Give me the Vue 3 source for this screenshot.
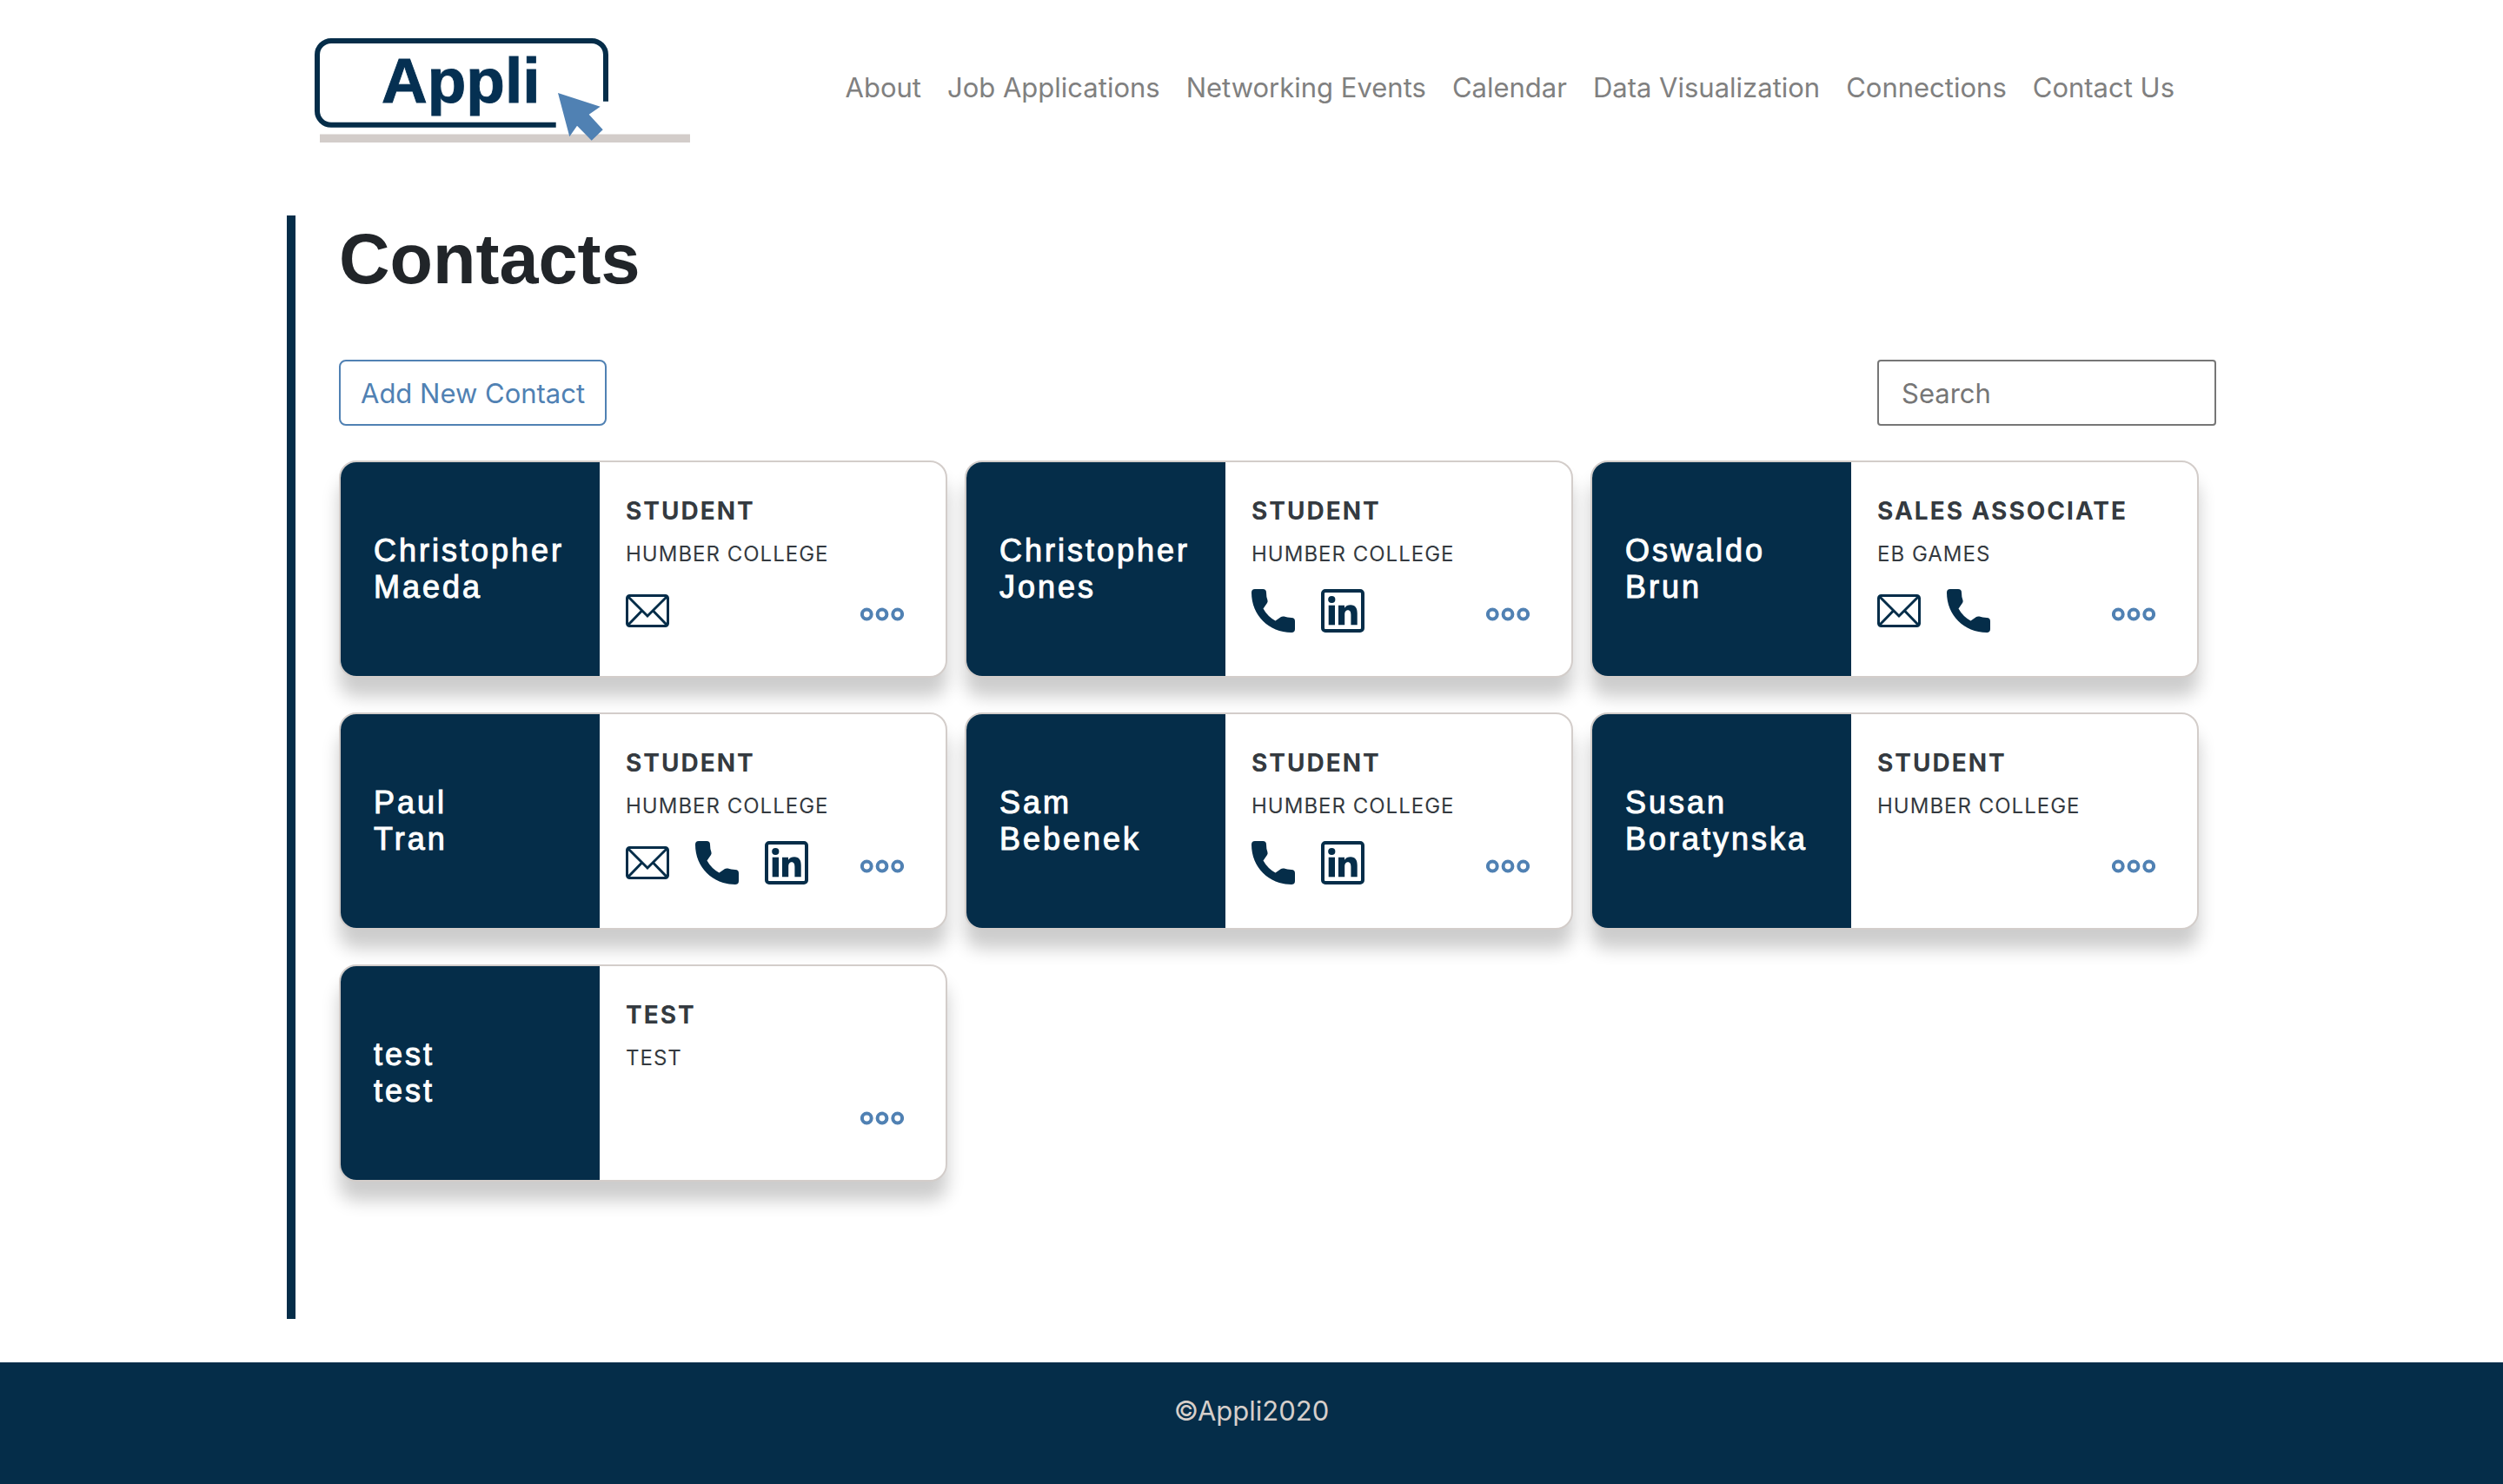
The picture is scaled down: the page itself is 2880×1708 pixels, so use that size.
<script setup>
import { ref, computed } from 'vue'

const links = [
  'About',
  'Job Applications',
  'Networking Events',
  'Calendar',
  'Data Visualization',
  'Connections',
  'Contact Us'
]

const contacts = [
  { first: 'Christopher', last: 'Maeda', role: 'Student', company: 'Humber College', via: ['email'] },
  { first: 'Christopher', last: 'Jones', role: 'Student', company: 'Humber College', via: ['phone', 'linkedin'] },
  { first: 'Oswaldo', last: 'Brun', role: 'Sales Associate', company: 'EB Games', via: ['email', 'phone'] },
  { first: 'Paul', last: 'Tran', role: 'Student', company: 'Humber College', via: ['email', 'phone', 'linkedin'] },
  { first: 'Sam', last: 'Bebenek', role: 'Student', company: 'Humber College', via: ['phone', 'linkedin'] },
  { first: 'Susan', last: 'Boratynska', role: 'Student', company: 'Humber College', via: [] },
  { first: 'test', last: 'test', role: 'Test', company: 'Test', via: [] }
]

const query = ref('')
const shown = computed(() =>
  contacts.filter((c) => `${c.first} ${c.last}`.toLowerCase().includes(query.value.toLowerCase()))
)
</script>

<template>
  <div class="page">
    <header class="container header">
      <a class="logo" href="#" aria-label="Appli home">
        <svg width="432" height="121" viewBox="0 0 432 121">
          <rect class="logo-line" x="6" y="110.5" width="426" height="9.5" />
          <path class="logo-box" d="M335 72.7V19a16 16 0 0 0-16-16H19A16 16 0 0 0 3 19v64.8a16 16 0 0 0 16 16h258.7" />
          <text class="logo-text" x="77" y="74">Appli</text>
          <path class="logo-cursor" d="M280 63l48.7 15.7-13 9 16 17.6-13 12.4-16.7-17-8.7 12.6z" />
        </svg>
      </a>
      <nav class="nav">
        <a v-for="link in links" :key="link" href="#">{{ link }}</a>
      </nav>
    </header>

    <div class="container">
      <main class="content">
        <h1>Contacts</h1>
        <div class="toolbar">
          <button type="button" class="add">Add New Contact</button>
          <input v-model="query" class="search" type="text" placeholder="Search" aria-label="Search" />
        </div>
        <div class="cards">
          <article v-for="(c, i) in shown" :key="i" class="card">
            <h2 class="name"><span>{{ c.first }}</span><span>{{ c.last }}</span></h2>
            <div class="info">
              <p class="role">{{ c.role }}</p>
              <p class="company">{{ c.company }}</p>
              <div class="actions">
                <a v-for="v in c.via" :key="v" href="#" :aria-label="v">
                  <svg v-if="v === 'email'" width="50" height="50" viewBox="0 0 50 50">
                    <rect class="stroke" x="1.5" y="7.5" width="47" height="35" rx="3" />
                    <path class="stroke" d="M2.5 8.5L25 31 47.5 8.5M2.5 41.5L18.5 25M47.5 41.5L31.5 25" />
                  </svg>
                  <svg v-else-if="v === 'phone'" width="50" height="50" viewBox="0 0 50 50">
                    <path d="M0 4Q0 0 4 0H13Q17 0 17 4 17 9 18.4 12.5 19 14.5 18 16L13.5 22.5Q18.5 31.5 27.5 36.5L34 32Q35.5 31 37.5 31.6 41 33 46 33 50 33 50 37V46Q50 50 46 50C20 50 0 30 0 4Z" />
                  </svg>
                  <svg v-else width="50" height="50" viewBox="0 0 50 50">
                    <rect class="frame" x="2" y="2" width="46" height="46" rx="3" />
                    <circle cx="12.3" cy="12" r="4.1" />
                    <rect x="8.7" y="18.7" width="7.3" height="22.6" />
                    <path d="M20 18.7h7v3c1.5-2.3 4-3.4 7-3.4 5.7 0 7.7 3.9 7.7 9.4v13.6h-7.3V29.5c0-3-.8-5.3-3.5-5.3s-3.7 2.3-3.7 5.3v11.8H20z" />
                  </svg>
                </a>
                <button type="button" class="more" aria-label="More">
                  <svg width="50" height="16" viewBox="0 0 50 16">
                    <circle cx="7.3" cy="8" r="5.4" />
                    <circle cx="25" cy="8" r="5.4" />
                    <circle cx="42.7" cy="8" r="5.4" />
                  </svg>
                </button>
              </div>
            </div>
          </article>
        </div>
      </main>
    </div>

    <footer class="footer">©Appli2020</footer>
  </div>
</template>

<style>
body {
  margin: 0;
  background: #fff;
}
</style>

<style scoped>
* {
  box-sizing: border-box;
}

.page {
  display: flex;
  flex-direction: column;
  min-height: 100vh;
  font-family: Inter, "Liberation Sans", sans-serif;
  font-size: 31px;
  line-height: 48px;
  color: #212529;
}

.container {
  width: 100%;
  max-width: 2280px;
  margin: 0 auto;
  padding: 0 30px;
}

.header {
  display: flex;
  justify-content: space-between;
  align-items: flex-start;
  padding: 44px 62px 83px;
}

.logo svg,
.actions svg {
  display: block;
}

.logo-line {
  fill: #d3cdca;
}

.logo-box {
  fill: none;
  stroke: #052d49;
  stroke-width: 6;
}

.logo-text {
  font: bold 73px "Liberation Sans", sans-serif;
  fill: #053052;
  stroke: #053052;
  stroke-width: 1;
}

.logo-cursor {
  fill: #5081b3;
}

.nav {
  display: flex;
  gap: 30px;
  margin-top: 33px;
  padding-right: 16px;
}

.nav a {
  color: #808080;
  text-decoration: none;
  white-space: nowrap;
}

.content {
  padding: 0 0 158px 50px;
  border-left: 10px solid #052d49;
}

h1 {
  margin: 0 0 66px;
  font: bold 81px/100px "Liberation Sans", sans-serif;
}

.toolbar {
  display: flex;
  justify-content: space-between;
  margin-bottom: 40px;
}

.add,
.search {
  height: 76px;
  padding: 0 26px;
  font: inherit;
  background: #fff;
}

.add {
  padding: 2px 23px 0;
  color: #5081b3;
  border: 2px solid #5081b3;
  border-radius: 8px;
}

.search {
  width: 390px;
  border: 2px solid #767676;
  border-radius: 4px;
}

.search::placeholder {
  color: #767676;
  opacity: 1;
}

.cards {
  display: grid;
  grid-template-columns: repeat(3, 1fr);
  gap: 40px 20px;
  padding-right: 20px;
}

.card {
  display: flex;
  min-height: 250px;
  overflow: hidden;
  background: #fff;
  border: 2px solid #d3cdca;
  border-radius: 20px;
  box-shadow: 0 22px 20px rgba(0, 0, 0, 0.2);
}

.name {
  display: flex;
  flex-direction: column;
  justify-content: center;
  flex: 0 0 298px;
  margin: 0;
  padding-left: 38px;
  font: 500 36px/42px "Liberation Sans", sans-serif;
  -webkit-text-stroke: 1px #fff;
  letter-spacing: 3px;
  color: #fff;
  background: #052d49;
}

.info {
  flex: 1;
  padding: 39px 48px 0 30px;
  color: #343a40;
  text-transform: uppercase;
}

.role {
  margin: 0 0 18px;
  font-size: 28px;
  line-height: 34px;
  font-weight: 700;
  letter-spacing: 2px;
}

.company {
  margin: 0 0 25px;
  font-size: 24px;
  line-height: 30px;
  letter-spacing: 1px;
}

.actions {
  display: flex;
  align-items: flex-start;
  gap: 30px;
  height: 58px;
}

.actions a {
  fill: #052d49;
}

.actions .stroke,
.actions .frame {
  fill: none;
  stroke: #052d49;
  stroke-width: 3;
}

.actions .frame {
  stroke-width: 4;
}

.more {
  align-self: center;
  margin-left: auto;
  padding: 0;
  background: none;
  border: 0;
}

.more svg {
  fill: none;
  stroke: #5081b3;
  stroke-width: 4;
}

.footer {
  flex: 1;
  margin-top: 50px;
  padding: 32px 0 60px;
  color: #d6cfcb;
  text-align: center;
  background: #052d49;
}
</style>
